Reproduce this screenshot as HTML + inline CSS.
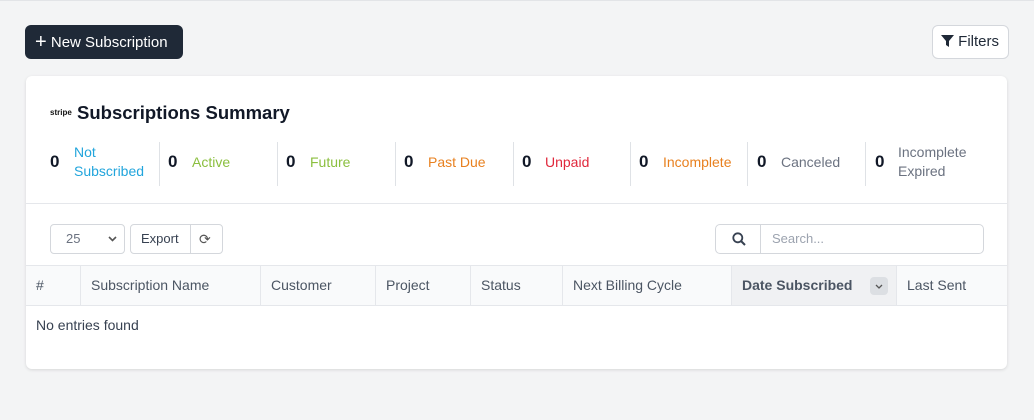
<!DOCTYPE html>
<html><head><style>
*{box-sizing:border-box;margin:0;padding:0}
body{width:1034px;height:420px;background:#f3f4f5;font-family:"Liberation Sans",sans-serif;position:relative;overflow:hidden}
.a{position:absolute}
.btn{left:25px;top:25px;width:158px;height:34px;background:#1f2937;border-radius:6px;color:#fff;font-size:15px;line-height:34px;padding-left:10px}
.fil{left:932px;top:25px;width:77px;height:34px;background:#fff;border:1px solid #d4d7dc;border-radius:6px;font-size:15px;line-height:32px;color:#1f2937;padding-left:8px}
.card{left:26px;top:76px;width:981px;height:293px;background:#fff;border-radius:6px;box-shadow:0 1px 3px rgba(0,0,0,.12)}
.n{font-size:17px;font-weight:bold;color:#111827;top:152px}
.l{font-size:14px;line-height:19px}
.sep{width:1px;height:44px;top:142px;background:#dfe2e6}
.th{top:266px;height:40px;line-height:39px;font-size:14px;color:#4b5563;padding-left:10px;border-right:1px solid #e5e7eb}
</style></head><body>
<div class="a" style="left:0;top:0;width:1034px;height:1px;background:#e2e4e7"></div>
<div class="a btn"><span style="font-size:20px;vertical-align:-1px">+</span> New Subscription</div>
<div class="a fil"><svg width="13" height="12" viewBox="0 0 13 12" style="vertical-align:-1px"><path d="M0 0H13L8 6V12L5 10V6Z" fill="#1f2937"/></svg> Filters</div>
<div class="a card">
<div class="a" style="left:24px;top:32px;font-size:8px;font-weight:bold;color:#111">stripe</div>
<div class="a" style="left:51px;top:26px;font-size:18.5px;font-weight:bold;color:#111827">Subscriptions Summary</div>
</div>
<div class="a n" style="left:50px">0</div><div class="a l" style="left:74px;top:143px;color:#22a5dc">Not<br>Subscribed</div>
<div class="a sep" style="left:159px"></div>
<div class="a n" style="left:168px">0</div><div class="a l" style="left:192px;top:153px;color:#8bbf3f">Active</div>
<div class="a sep" style="left:277px"></div>
<div class="a n" style="left:286px">0</div><div class="a l" style="left:310px;top:153px;color:#8bbf3f">Future</div>
<div class="a sep" style="left:395px"></div>
<div class="a n" style="left:404px">0</div><div class="a l" style="left:428px;top:153px;color:#e8801f">Past Due</div>
<div class="a sep" style="left:513px"></div>
<div class="a n" style="left:522px">0</div><div class="a l" style="left:545px;top:153px;color:#e0283c">Unpaid</div>
<div class="a sep" style="left:630px"></div>
<div class="a n" style="left:639px">0</div><div class="a l" style="left:663px;top:153px;color:#e8801f">Incomplete</div>
<div class="a sep" style="left:747px"></div>
<div class="a n" style="left:757px">0</div><div class="a l" style="left:781px;top:153px;color:#6b7280">Canceled</div>
<div class="a sep" style="left:865px"></div>
<div class="a n" style="left:875px">0</div><div class="a l" style="left:898px;top:143px;color:#6b7280">Incomplete<br>Expired</div>
<div class="a" style="left:26px;top:203px;width:981px;height:1px;background:#e5e7eb"></div>
<div class="a" style="left:50px;top:224px;width:75px;height:30px;border:1px solid #d4d7dc;border-radius:4px;font-size:13px;color:#6b7280;line-height:28px;padding-left:15px">25<svg class="a" style="left:57px;top:11px" width="9" height="6" viewBox="0 0 9 6"><path d="M1 1L4.5 4.5L8 1" stroke="#555" stroke-width="1.6" fill="none"/></svg></div>
<div class="a" style="left:130px;top:224px;width:93px;height:30px;border:1px solid #d4d7dc;border-radius:4px;font-size:13px;color:#374151;line-height:28px;padding-left:10px">Export<div class="a" style="left:59px;top:0;width:1px;height:28px;background:#d4d7dc"></div><span class="a" style="left:68px;top:0;font-size:14px;color:#555">⟳</span></div>
<div class="a" style="left:715px;top:224px;width:269px;height:30px;border:1px solid #d4d7dc;border-radius:5px"><div class="a" style="left:44px;top:0;width:1px;height:28px;background:#d4d7dc"></div><svg class="a" style="left:16px;top:7px" width="14" height="14" viewBox="0 0 14 14"><circle cx="5.8" cy="5.8" r="4.5" stroke="#374151" stroke-width="1.8" fill="none"/><path d="M9 9L13 13" stroke="#374151" stroke-width="2"/></svg><span class="a" style="left:56px;top:6px;font-size:13px;color:#9ca3af">Search...</span></div>
<div class="a" style="left:26px;top:265px;width:981px;height:41px;background:#f9fafb;border-top:1px solid #e5e7eb;border-bottom:1px solid #e5e7eb"></div>
<div class="a th" style="left:26px;width:55px">#</div>
<div class="a th" style="left:81px;width:180px">Subscription Name</div>
<div class="a th" style="left:261px;width:115px">Customer</div>
<div class="a th" style="left:376px;width:95px">Project</div>
<div class="a th" style="left:471px;width:92px">Status</div>
<div class="a th" style="left:563px;width:169px">Next Billing Cycle</div>
<div class="a th" style="left:732px;width:165px;height:39px;background:#f0f1f3;font-weight:bold;color:#4b5563">Date Subscribed<span class="a" style="left:138px;top:11px;width:18px;height:18px;border-radius:4px;background:#dcdfe3"></span><svg class="a" style="left:143px;top:18px" width="8" height="5" viewBox="0 0 8 5"><path d="M1 1L4 4L7 1" stroke="#555" stroke-width="1.3" fill="none"/></svg></div>
<div class="a th" style="left:897px;width:110px;border:0">Last Sent</div>
<div class="a" style="left:36px;top:317px;font-size:14px;color:#374151">No entries found</div>
</body></html>
